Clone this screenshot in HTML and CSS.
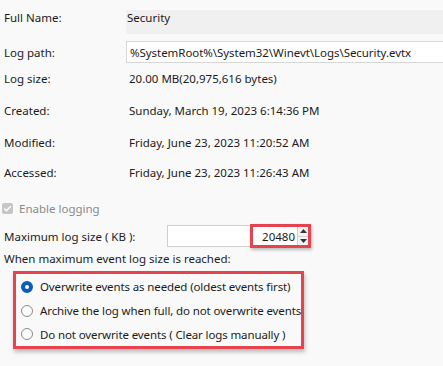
FILE: index.html
```html
<!DOCTYPE html>
<html>
<head>
<meta charset="utf-8">
<link rel="stylesheet" href="styles.css">
</head>
<body>
<div class="page">
  <div class="row r-name">
    <div class="label">Full Name:</div>
    <div class="field-ro">Security</div>
  </div>
  <div class="row r-path">
    <div class="label">Log path:</div>
    <div class="field">%SystemRoot%\System32\Winevt\Logs\Security.evtx</div>
  </div>
  <div class="row r-size">
    <div class="label">Log size:</div>
    <div class="value">20.00 MB(20,975,616 bytes)</div>
  </div>
  <div class="row r-created">
    <div class="label">Created:</div>
    <div class="value">Sunday, March 19, 2023 6:14:36 PM</div>
  </div>
  <div class="row r-mod">
    <div class="label">Modified:</div>
    <div class="value">Friday, June 23, 2023 11:20:52 AM</div>
  </div>
  <div class="row r-acc">
    <div class="label">Accessed:</div>
    <div class="value">Friday, June 23, 2023 11:26:43 AM</div>
  </div>

  <div class="enable">
    <span class="checkbox">
      <svg width="11" height="11" viewBox="0 0 11 11"><path d="M2.2 5.6 L4.4 7.8 L8.8 3.2" fill="none" stroke="#fff" stroke-width="1.4"/></svg>
    </span>
    <span class="enable-text">Enable logging</span>
  </div>

  <div class="maxrow">
    <div class="maxlabel">Maximum log size ( KB ):</div>
    <div class="spin">
      <div class="spin-blank"></div>
      <div class="spin-hl">
        <span class="spin-val">20480</span>
        <span class="spin-btns">
          <span class="btn"><svg width="7" height="4" viewBox="0 0 7 4"><path d="M0 4 L3.5 0 L7 4 Z" fill="#333"/></svg></span>
          <span class="btn"><svg width="7" height="4" viewBox="0 0 7 4"><path d="M0 0 L3.5 4 L7 0 Z" fill="#333"/></svg></span>
        </span>
      </div>
    </div>
  </div>

  <div class="when">When maximum event log size is reached:</div>

  <div class="options">
    <div class="opt"><span class="radio on"></span><span>Overwrite events as needed (oldest events first)</span></div>
    <div class="opt"><span class="radio"></span><span>Archive the log when full, do not overwrite events</span></div>
    <div class="opt"><span class="radio"></span><span>Do not overwrite events ( Clear logs manually )</span></div>
  </div>
</div>
</body>
</html>
```

FILE: styles.css
```css
html, body {
  margin: 0;
  padding: 0;
  background: #f9f9f9;
}
body {
  font-family: "Noto Sans", "Open Sans", sans-serif;
  font-size: 11.5px;
  color: #1b1b1b;
  width: 443px;
  height: 366px;
  overflow: hidden;
}
.page {
  display: flex;
  flex-direction: column;
  padding-left: 4px;
}
.row {
  display: flex;
  align-items: center;
  height: 22px;
  line-height: 15px;
}
.label {
  width: 122px;
  flex: none;
}
.r-name {
  align-items: flex-start;
  height: 24px;
  margin-top: 10px;
}
.field-ro {
  flex: 1;
  height: 24px;
  background: #f0f0f0;
  padding-left: 1px;
  box-sizing: border-box;
}
.r-path { margin-top: 7px; }
.field {
  flex: 1;
  height: 22px;
  background: #fff;
  border: 1px solid #d6d6d6;
  border-right: none;
  box-sizing: border-box;
  display: flex;
  align-items: center;
  padding-left: 3px;
  letter-spacing: -0.05px;
}
.value { padding-left: 3px; }
.r-size { margin-top: 4px; }
.r-created { margin-top: 10px; }
.r-mod { margin-top: 10px; }
.r-acc { margin-top: 8px; }

.enable {
  display: flex;
  align-items: center;
  margin-top: 14px;
  margin-left: -2px;
  height: 22px;
  color: #8a8a8a;
}
.checkbox {
  width: 11px;
  height: 11px;
  border-radius: 2px;
  background: #c6c6c6;
  display: inline-flex;
  margin-right: 6px;
}
.maxrow {
  display: flex;
  align-items: center;
  margin-top: 5px;
  height: 24px;
}
.maxlabel { width: 163px; flex: none; }
.spin {
  display: flex;
  height: 24px;
  box-sizing: border-box;
}
.spin-blank {
  width: 83px;
  height: 22px;
  margin-top: 1px;
  background: #fff;
  border: 1px solid #cfcfcf;
  border-right: none;
  box-sizing: border-box;
}
.spin-hl {
  display: flex;
  align-items: center;
  width: 61px;
  height: 24px;
  border: 3px solid #e5434d;
  box-sizing: border-box;
  background: #fff;
  box-shadow: 1px 2px 3px rgba(0,0,0,0.25);
}
.spin-val {
  flex: 1;
  text-align: right;
  padding-right: 2px;
}
.spin-btns {
  display: flex;
  flex-direction: column;
  width: 10px;
  height: 18px;
  border-left: 1px solid #d0d0d0;
}
.btn {
  flex: 1;
  display: flex;
  align-items: center;
  justify-content: center;
  background: #f3f3f3;
}
.btn + .btn { border-top: 1px solid #d0d0d0; }

.when {
  margin-top: 3px;
  line-height: 16px;
}
.options {
  margin-top: 4px;
  margin-left: 9px;
  width: 291px;
  height: 78px;
  box-sizing: border-box;
  border: 3px solid #e5434d;
  box-shadow: 1px 3px 4px rgba(0,0,0,0.25);
  display: flex;
  flex-direction: column;
  padding-top: 1px;
  white-space: nowrap;
  letter-spacing: -0.12px;
}
.opt {
  display: flex;
  align-items: center;
  height: 25px;
}
.radio {
  width: 12px;
  height: 12px;
  box-sizing: border-box;
  border-radius: 50%;
  border: 1px solid #8b8b8b;
  background: #fbfbfb;
  margin-left: 5px;
  margin-right: 7px;
  flex: none;
}
.radio.on {
  border: 4px solid #0a5fb4;
  background: #fff;
}
```
